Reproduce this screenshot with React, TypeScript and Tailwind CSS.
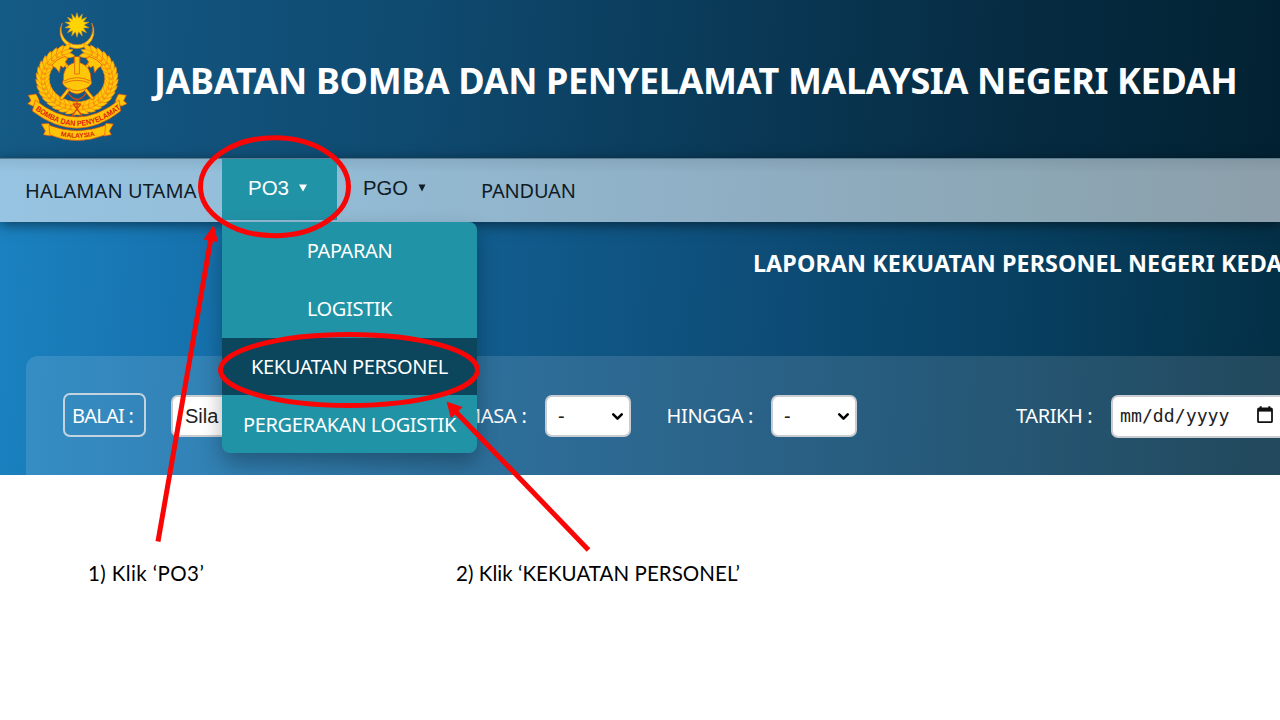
import { ChevronDown } from "lucide-react";

const RED = "#f80606";

const sunPoints = Array.from({ length: 28 }, (_, i) => {
  const r = i % 2 === 0 ? 37 : 21;
  const a = (i * Math.PI) / 14 - Math.PI / 2;
  return `${(231 + r * Math.cos(a)).toFixed(1)},${(75 + r * Math.sin(a)).toFixed(1)}`;
}).join(" ");

const leaves = Array.from({ length: 17 }, (_, i) => {
  const deg = 86 + i * 10.3;
  const a = (deg * Math.PI) / 180;
  return { x: 231 + 102 * Math.cos(a), y: 238 + 86 * Math.sin(a), rot: deg + 90 };
});

function WreathHalf() {
  return (
    <g fill="#ffc60a" stroke="#f0780c" strokeWidth="1.5">
      <path d="M231 324 C165 324 129 285 129 238 C129 190 155 165 200 152" fill="none" stroke="#ffb60a" strokeWidth="30" />
      {leaves.map((l, i) => (
        <g key={i} transform={`translate(${l.x} ${l.y}) rotate(${l.rot})`}>
          <path d="M-14 5 Q-6 -24 22 -20 Q14 -1 -14 5Z" />
          <path d="M-14 -5 Q-6 24 22 20 Q14 1 -14 -5Z" />
          <path d="M-15 0 Q2 -13 23 0 Q2 13 -15 0Z" />
        </g>
      ))}
    </g>
  );
}

function Axe() {
  return (
    <g>
      <path d="M184 186 L276 300 L283 295 L192 180Z" />
      <path d="M155 197 Q168 178 194 170 L203 176 L196 186 L200 194 L190 203 L182 198 L178 219 Q170 202 155 197Z" />
    </g>
  );
}

function Crest() {
  return (
    <svg viewBox="78 36 309 390" className="h-[130px] w-[103px] shrink-0" aria-hidden="true">
      <defs>
        <path id="ribbonUpper" d="M103 327 Q231 428 361 327" />
        <path id="ribbonLower" d="M178 407 Q231 420 291 406" />
      </defs>
      <path
        d="M187 69 A51 51 0 1 0 275 69 A47.5 47.5 0 1 1 187 69Z"
        fill="#ffd21a"
        stroke="#e8741a"
        strokeWidth="2"
      />
      <polygon points={sunPoints} fill="#ffd400" stroke="#e8941a" strokeWidth="1.5" />
      <WreathHalf />
      <g transform="translate(462 0) scale(-1 1)">
        <WreathHalf />
      </g>
      <g fill="#ffc70a" stroke="#d9480f" strokeWidth="2">
        <Axe />
        <g transform="translate(462 0) scale(-1 1)">
          <Axe />
        </g>
        <path d="M190 240 Q188 199 222 188 L222 170 L240 170 L240 188 Q274 199 273 240 Q281 252 260 264 Q250 280 231 282 Q211 280 201 264 Q182 252 190 240Z" />
        <path d="M224 172 V222 H238 V172 M190 244 Q231 222 273 244 M193 249 Q231 233 269 249 M203 264 Q231 280 259 264" fill="none" />
        <path d="M205 280 Q231 316 258 280 M213 352 L243 311 M249 352 L219 311 M222 312 H240 M231 300 V328" fill="none" strokeWidth="4" />
      </g>
      <g fill="#ffc30a" stroke="#e5520f" strokeWidth="2">
        <path d="M124 372 L145 370 L160 388 L152 408 L130 404 L136 393Z" />
        <path d="M340 372 L319 370 L304 388 L312 408 L334 404 L328 393Z" />
        <path d="M147 376 Q231 408 317 376 L314 405 Q231 438 150 405Z" />
        <path d="M85 286 L108 282 Q122 304 118 316 L98 318 L83 311 L93 302Z" />
        <path d="M379 286 L356 282 Q342 304 346 316 L366 318 L381 311 L371 302Z" />
        <path d="M106 300 Q231 402 357 300 L362 333 Q231 436 97 333Z" />
      </g>
      <g className="font-['Liberation_Sans'] font-bold" fill="#d8230c">
        <text fontSize="23" textLength="282" lengthAdjust="spacingAndGlyphs">
          <textPath href="#ribbonUpper" startOffset="3">BOMBA DAN PENYELAMAT</textPath>
        </text>
        <text fontSize="20" textLength="104" lengthAdjust="spacingAndGlyphs">
          <textPath href="#ribbonLower" startOffset="4">MALAYSIA</textPath>
        </text>
      </g>
    </svg>
  );
}

function DropdownItem({ label, active = false }: { label: string; active?: boolean }) {
  return (
    <li
      className={
        "flex h-[57.75px] items-center justify-center pt-px text-[20px] tracking-[-0.4px] whitespace-nowrap text-white " +
        (active ? "bg-[#0b465d]" : "")
      }
    >
      {label}
    </li>
  );
}

function TimeSelect() {
  return (
    <div className="flex h-[42px] w-[86px] items-center justify-between rounded-[7px] border-2 border-[#c9ccd0] bg-white pr-[3px] pl-[11px] font-['Liberation_Sans',sans-serif] text-[20px] text-[#222]">
      <span>-</span>
      <ChevronDown className="size-[17px] text-black" strokeWidth={3.6} />
    </div>
  );
}

function CalendarIcon() {
  return (
    <svg viewBox="0 0 16 18" className="mb-[3px] h-[18px] w-4 shrink-0" fill="none" stroke="#111" strokeWidth="1.8">
      <rect x="1" y="2.5" width="14" height="13.7" rx="1" />
      <path d="M1 4H15" strokeWidth="3.2" />
      <path d="M3.7 0.3V3M12.3 0.3V3" strokeWidth="2" />
    </svg>
  );
}

function Annotations() {
  return (
    <svg viewBox="0 0 1280 720" className="pointer-events-none absolute inset-0 z-30 h-[720px] w-[1280px]" fill="none">
      <g stroke={RED} strokeWidth="5">
        <ellipse cx="274.5" cy="186.7" rx="74" ry="49" />
        <ellipse cx="349" cy="370" rx="128.5" ry="35.5" />
        <path d="M158 541.5 L211 238" />
        <path d="M588.5 550 L455 411" />
      </g>
      <path d="M213.7 225 L203.5 239.5 L218 242Z M446.5 401.5 L451 418.5 L462.5 407Z" fill={RED} />
    </svg>
  );
}

export default function App() {
  return (
    <div className="relative h-[720px] w-[1280px] overflow-hidden bg-white font-['Noto_Sans','Open_Sans',sans-serif]">
      <div className="flex h-[475px] flex-col overflow-hidden bg-[linear-gradient(93deg,#1b82c1_0%,#1672ad_16%,#115b8c_40%,#0e4f7b_56%,#073f60_80%,#042f45_100%)]">
        <header className="flex h-[158px] shrink-0 items-start bg-[linear-gradient(93deg,#145b86_0%,#12547e_12%,#0f4a70_32%,#0a3a58_56%,#062c43_78%,#022232_100%)] pt-3 pl-[26px]">
          <Crest />
          <h1 className="mt-[44px] ml-[25px] text-[36px] leading-[50px] font-bold tracking-[-0.37px] whitespace-nowrap text-white">
            JABATAN BOMBA DAN PENYELAMAT MALAYSIA NEGERI KEDAH
          </h1>
        </header>

        <nav className="relative z-10 flex h-16 shrink-0 border-t border-[#5c7c90] bg-[linear-gradient(180deg,rgba(40,60,80,0.1),rgba(40,60,80,0)_22%),linear-gradient(92deg,#97c4e2_0%,#92b8d0_35%,#8faec3_58%,#8ca7b5_80%,#8c9faa_100%)] text-[20px] text-[#101c26] shadow-[0_3px_12px_rgba(0,0,0,0.5)]">
          <a className="flex w-[222px] items-center pl-[25px] tracking-[0.1px] whitespace-nowrap">HALAMAN UTAMA</a>
          <div className="relative w-[115px]">
            <button className="flex h-[61px] w-full items-center gap-[10px] bg-[#2193a7] pb-[3px] pl-[26px] font-['Liberation_Sans',sans-serif] text-[20.5px] text-white">
              <span>PO3</span>
              <svg viewBox="0 0 8 8" className="size-2 fill-white"><path d="M0 0.5H8L4 7.5Z" /></svg>
            </button>
            <ul className="absolute top-[63px] left-0 h-[231px] w-[255px] overflow-hidden rounded-[8px] rounded-tl-none bg-[#2193a7] shadow-[0_10px_22px_rgba(0,0,0,0.3)]">
              <DropdownItem label="PAPARAN" />
              <DropdownItem label="LOGISTIK" />
              <DropdownItem label="KEKUATAN PERSONEL" active />
              <DropdownItem label="PERGERAKAN LOGISTIK" />
            </ul>
          </div>
          <button className="flex h-[61px] w-[119px] items-center gap-[10px] pb-[3px] pl-[26px] font-['Liberation_Sans',sans-serif] text-[20.3px]">
            <span>PGO</span>
            <svg viewBox="0 0 8 8" className="size-2 fill-[#101c26]"><path d="M0.5 0.5H7.5L4 7.5Z" /></svg>
          </button>
          <a className="flex items-center pl-[25px] tracking-[-0.2px]">PANDUAN</a>
        </nav>

        <main className="flex min-h-0 flex-1 flex-col">
          <h2 className="mt-[26px] ml-[753px] text-[23.3px] leading-[30px] font-bold tracking-[0.1px] whitespace-nowrap text-white">
            LAPORAN KEKUATAN PERSONEL NEGERI KEDAH
          </h2>
          <section className="mt-[78px] ml-[26px] flex min-h-0 flex-1 items-start rounded-tl-[12px] bg-white/12 pt-[37px] pl-[37px] text-[20px] text-white">
            <label className="flex h-[44px] w-[83px] shrink-0 items-center rounded-[7px] border-2 border-[#c3d3e0] pt-0.5 pl-[7px] tracking-[-0.75px] whitespace-nowrap">
              BALAI :
            </label>
            <div className="mt-[2px] ml-[25px] flex h-[42px] w-[270px] shrink-0 items-center rounded-[7px] border-2 border-[#c9ccd0] bg-white pl-3 font-['Liberation_Sans',sans-serif] text-[#222]">
              Sila
            </div>
            <div className="mt-[2px] ml-[22px] flex h-[42px] shrink-0 items-center">
              <label className="w-[82px] tracking-[-0.3px] whitespace-nowrap">MASA :</label>
              <TimeSelect />
              <label className="ml-[35.5px] w-[104.5px] tracking-[-0.35px] whitespace-nowrap">HINGGA :</label>
              <TimeSelect />
              <label className="ml-[159px] w-[95px] tracking-[-0.4px] whitespace-nowrap">TARIKH :</label>
              <div className="flex h-[43px] w-[180px] items-center rounded-[7px] border-2 border-[#c9ccd0] bg-white pl-[7px] font-['DejaVu_Sans_Mono',monospace] text-[18.2px] text-[#222]">
                <span className="w-[137px]">mm/dd/yyyy</span>
                <CalendarIcon />
              </div>
            </div>
          </section>
        </main>
      </div>

      <div className="flex pt-[83px] pl-[88px] font-['Lato',sans-serif] text-[20.5px] leading-[30px] text-black">
        <p className="w-[368px] tracking-[0.4px]">1) Klik ‘PO3’</p>
        <p className="tracking-[0.05px] whitespace-nowrap">2) Klik ‘KEKUATAN PERSONEL’</p>
      </div>

      <Annotations />
    </div>
  );
}
